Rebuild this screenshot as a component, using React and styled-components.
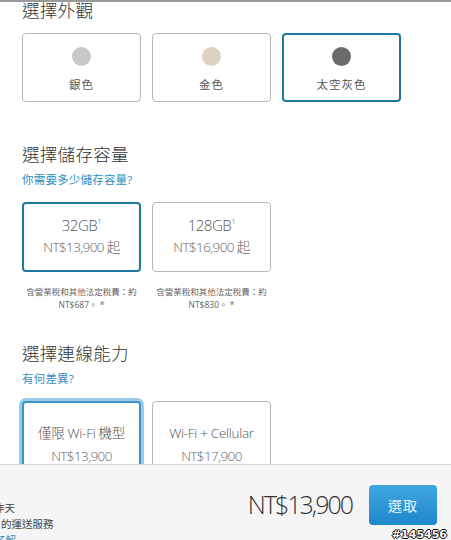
import React from 'react';
import styled, { createGlobalStyle } from 'styled-components';

const FONT = `"Open Sans", "Noto Sans CJK TC", sans-serif`;

const GlobalStyle = createGlobalStyle`
  html, body {
    margin: 0;
    padding: 0;
    background: #ffffff;
  }
  body {
    font-family: ${FONT};
    color: #333;
  }
`;

const colors = [
  { name: '銀色', swatch: '#c8c8c8' },
  { name: '金色', swatch: '#ddd1c0' },
  { name: '太空灰色', swatch: '#6b6b6b', selected: true },
];

const storage = [
  { size: '32GB', price: 'NT$13,900 起', note: 'NT$687。', selected: true },
  { size: '128GB', price: 'NT$16,900 起', note: 'NT$830。' },
];

const connectivity = [
  { name: '僅限 Wi-Fi 機型', price: 'NT$13,900', selected: true },
  { name: 'Wi-Fi + Cellular', price: 'NT$17,900' },
];

const App = () => {
  return (
    <Page>
      <GlobalStyle />
      <Main>
        <Title gap={-4}>選擇外觀</Title>
        <CardRow top={11}>
          {colors.map((c) => (
            <ColorCard key={c.name} selected={c.selected}>
              <Swatch color={c.swatch} />
              <ColorName>{c.name}</ColorName>
            </ColorCard>
          ))}
        </CardRow>

        <Title gap={40}>選擇儲存容量</Title>
        <HelpLink>你需要多少儲存容量?</HelpLink>
        <CardRow>
          {storage.map((s) => (
            <Column key={s.size}>
              <OptionCard selected={s.selected}>
                <Size>
                  {s.size}
                  <sup>1</sup>
                </Size>
                <Price>{s.price}</Price>
              </OptionCard>
              <Note>
                含營業稅和其他法定稅費：約
                <br />
                {s.note} *
              </Note>
            </Column>
          ))}
        </CardRow>

        <Title gap={30}>選擇連線能力</Title>
        <HelpLink>有何差異?</HelpLink>
        <CardRow>
          {connectivity.map((c) => (
            <ConnCard key={c.name} selected={c.selected}>
              <ConnName>{c.name}</ConnName>
              <ConnPrice>{c.price}</ConnPrice>
            </ConnCard>
          ))}
        </CardRow>
      </Main>

      <Bar>
        <Delivery>
          <DeliveryLine shift={-6}>昨天</DeliveryLine>
          <DeliveryLine shift={1}>的運送服務</DeliveryLine>
          <DeliveryLink shift={-5}>了解</DeliveryLink>
        </Delivery>
        <Total>NT$13,900</Total>
        <SelectButton>選取</SelectButton>
        <Watermark>#145456</Watermark>
      </Bar>
    </Page>
  );
};

const Page = styled.div`
  height: 540px;
  display: flex;
  flex-direction: column;
  overflow: hidden;
  border-top: 2px solid #9a9a9a;
  box-sizing: border-box;
`;

const Main = styled.main`
  flex: 1;
  overflow: hidden;
  padding-left: 22px;
`;

const Title = styled.h2`
  margin: ${(p) => p.gap}px 0 0;
  font-size: 17.5px;
  font-weight: 300;
  line-height: 24px;
  color: #333;
  letter-spacing: 0.3px;
`;

const HelpLink = styled.a`
  display: block;
  margin-top: 5px;
  font-size: 11.5px;
  line-height: 18px;
  color: #2f8ec2;
  letter-spacing: 0.2px;
`;

const CardRow = styled.div`
  display: flex;
  gap: 11px;
  margin-top: ${(p) => p.top ?? 13}px;
`;

const Column = styled.div`
  display: flex;
  flex-direction: column;
  width: 119px;
`;

const Card = styled.div`
  box-sizing: border-box;
  width: 119px;
  background: #fff;
  border-radius: 4px;
  border: ${(p) => (p.selected ? '2px solid #1d789f' : '1px solid #b8b8b8')};
  display: flex;
  flex-direction: column;
  align-items: center;
  color: #555;
`;

const ColorCard = styled(Card)`
  height: 69px;
  padding-top: ${(p) => (p.selected ? 12 : 13)}px;
`;

const Swatch = styled.span`
  width: 19px;
  height: 19px;
  border-radius: 50%;
  background: ${(p) => p.color};
`;

const ColorName = styled.span`
  margin-top: 11px;
  font-size: 11.5px;
  line-height: 16px;
  letter-spacing: 1px;
`;

const OptionCard = styled(Card)`
  height: 70px;
  justify-content: center;
  gap: 2px;
  padding-bottom: 3px;
`;

const Size = styled.div`
  font-size: 15px;
  font-weight: 300;
  line-height: 20px;
  letter-spacing: -0.5px;
  sup {
    font-size: 8px;
    vertical-align: top;
    line-height: 12px;
  }
`;

const Price = styled.div`
  font-size: 13.5px;
  font-weight: 300;
  line-height: 20px;
  letter-spacing: -0.6px;
  color: #666;
`;

const Note = styled.p`
  margin: 13px 0 0;
  font-size: 8.5px;
  line-height: 13px;
  text-align: center;
  color: #666;
`;

const ConnCard = styled(Card)`
  height: 90px;
  padding-top: ${(p) => (p.selected ? 20 : 21)}px;
  border-color: ${(p) => (p.selected ? '#3a94c9' : '#b8b8b8')};
  box-shadow: ${(p) => (p.selected ? '0 0 0 3px #9ccbea' : 'none')};
  gap: 6px;
`;

const ConnName = styled.div`
  font-size: 13.5px;
  font-weight: 300;
  line-height: 20px;
  letter-spacing: -0.3px;
  color: #555;
`;

const ConnPrice = styled(Price)`
  line-height: 14px;
`;

const Bar = styled.footer`
  position: relative;
  height: 76px;
  flex-shrink: 0;
  box-sizing: border-box;
  background: #f5f5f5;
  border-top: 1px solid #d6d6d6;
  display: flex;
  align-items: center;
  padding-right: 14px;
`;

const Delivery = styled.div`
  flex: 1;
  align-self: flex-start;
  padding-top: 35px;
  display: flex;
  flex-direction: column;
  font-size: 10.5px;
  line-height: 16px;
  color: #444;
`;

const DeliveryLine = styled.span`
  margin-left: ${(p) => p.shift}px;
  white-space: nowrap;
`;

const DeliveryLink = styled(DeliveryLine)`
  color: #2f8ec2;
`;

const Total = styled.div`
  font-size: 25px;
  font-weight: 300;
  color: #333;
  letter-spacing: -2px;
  margin-right: 17px;
  margin-top: 3px;
`;

const SelectButton = styled.button`
  width: 68px;
  height: 40px;
  border: none;
  border-radius: 4px;
  background: linear-gradient(#40a7e0, #1c87cb);
  color: #e8f4fb;
  font-family: ${FONT};
  font-size: 14px;
  letter-spacing: 1px;
  margin-top: 4px;
`;

const Watermark = styled.span`
  position: absolute;
  right: 4px;
  bottom: -1px;
  font-family: "DejaVu Sans", sans-serif;
  font-weight: 700;
  font-size: 11px;
  color: #fff;
  text-shadow: -1px 0 #000, 1px 0 #000, 0 -1px #000, 0 1px #000;
`;

export default App;
